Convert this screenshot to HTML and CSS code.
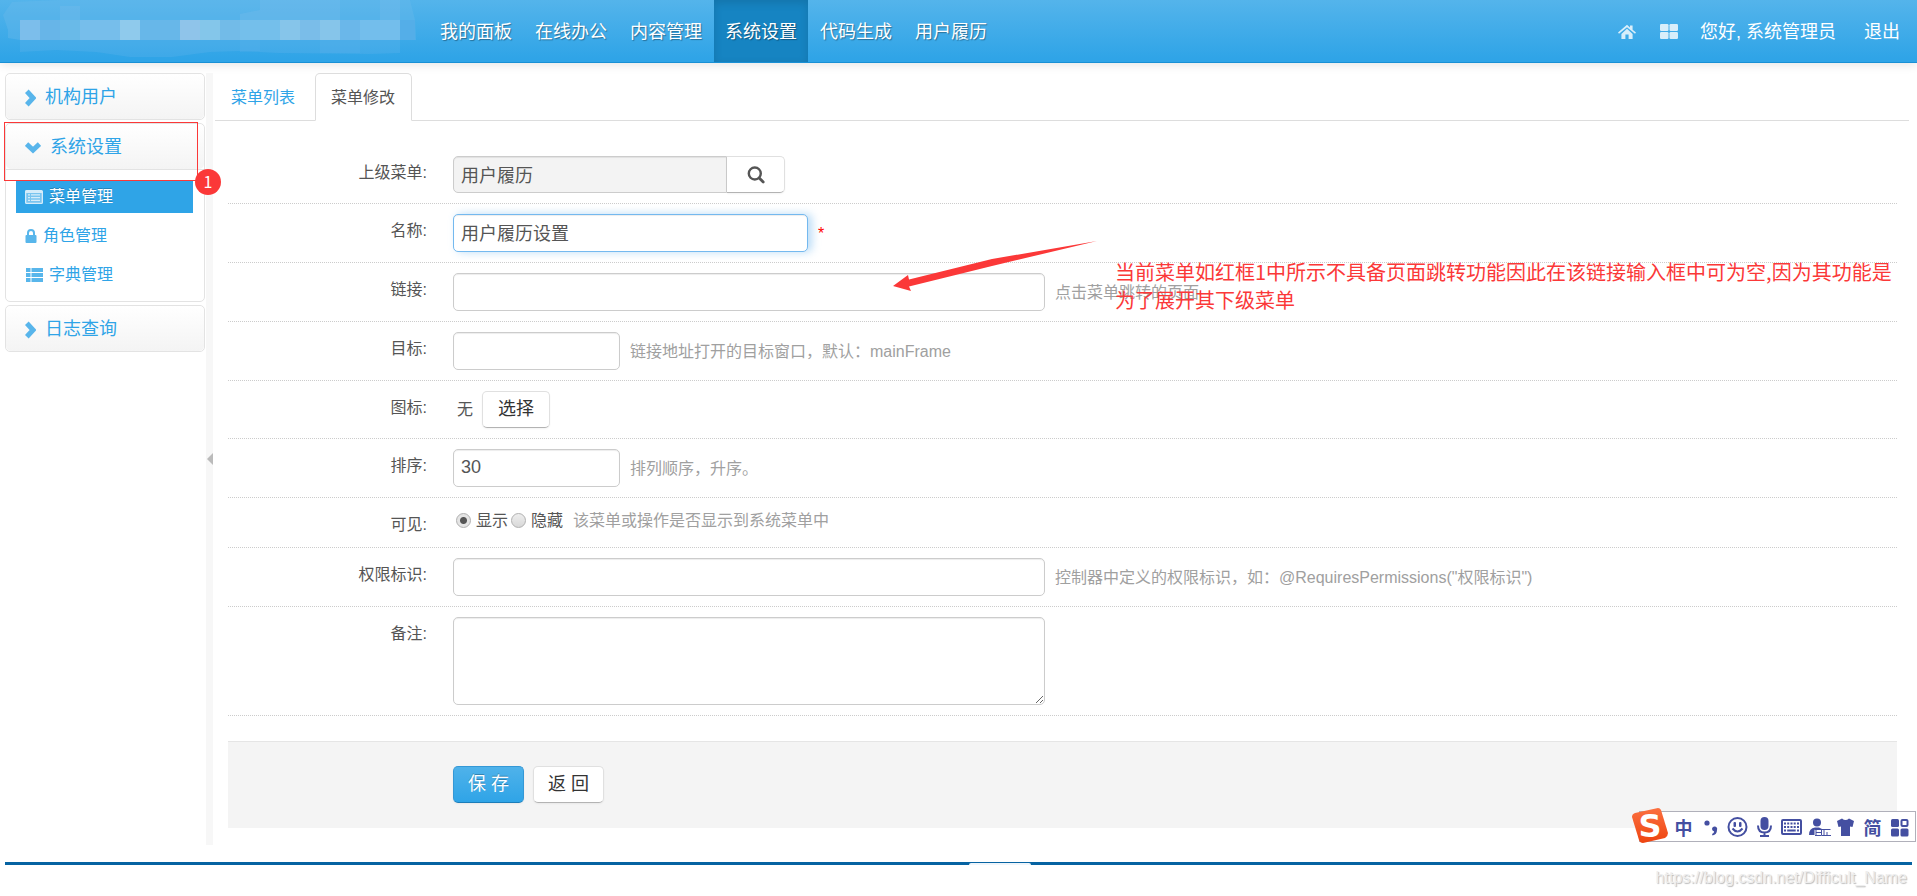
FILE: index.html
```html
<!DOCTYPE html>
<html lang="zh-CN">
<head>
<meta charset="utf-8">
<title>菜单修改</title>
<link rel="stylesheet" href="styles.css">
</head>
<body>
<header class="navbar">
  <svg class="brand" width="418" height="60" viewBox="0 0 418 60" aria-hidden="true">
    <path fill="#6ab8ea" fill-opacity=".4" d="M12 2 60 0H410l5 20 1 20H20L8 38V30L3 15z"/>
    <path fill="#6ab8ea" fill-opacity=".25" d="M20 40H400v13l-30 1-92-1-38-2-30 1-38 5h-42l-34-5-40-2-18 1-18 1z"/>
    <path fill="#7abdec" fill-opacity=".3" d="M60 6h20v14H60zM240 14l20-4V0h80v20h-100zM380 0h20v20h-20z"/>
    <path fill="#58b0ea" fill-opacity=".3" d="M240 40h20v11l-20 1zM320 40h40v13h-40z"/>
    <g>
      <rect x="20" y="20" width="20" height="20" fill="#7cbeeb"/><rect x="40" y="20" width="20" height="20" fill="#67b5e8"/>
      <rect x="60" y="20" width="20" height="20" fill="#69bae8"/><rect x="80" y="20" width="40" height="20" fill="#76beeb"/>
      <rect x="120" y="20" width="20" height="20" fill="#8fcaec"/><rect x="140" y="20" width="40" height="20" fill="#67b7e9"/>
      <rect x="180" y="20" width="20" height="20" fill="#8fc4ea"/><rect x="200" y="20" width="20" height="20" fill="#84c6ea"/>
      <rect x="220" y="20" width="20" height="20" fill="#72bbe8"/><rect x="240" y="20" width="40" height="20" fill="#74bfeb"/>
      <rect x="280" y="20" width="20" height="20" fill="#86c5ea"/><rect x="300" y="20" width="20" height="20" fill="#7abde9"/>
      <rect x="320" y="20" width="20" height="20" fill="#86c5ea"/><rect x="340" y="20" width="20" height="20" fill="#6ab7ea"/>
      <rect x="360" y="20" width="40" height="20" fill="#73beec"/><rect x="400" y="20" width="15" height="20" fill="#54aee8"/>
    </g>
  </svg>
  <nav class="nav">
    <a href="#">我的面板</a>
    <a href="#">在线办公</a>
    <a href="#">内容管理</a>
    <a href="#" class="active">系统设置</a>
    <a href="#">代码生成</a>
    <a href="#">用户履历</a>
  </nav>
  <div class="user">
    <a href="#" class="user-icon" aria-label="首页"><svg width="18" height="16" viewBox="0 0 18 16"><path d="M9 4.800 14.600 10v5h-4v-4.500H7.400V15h-4v-5zM9 .800l3 2.600V1.500h2.600v4.200L18 8.600l-1 1.200L9 3.200 1 9.800 0 8.600z"/></svg></a>
    <a href="#" class="user-icon" aria-label="主题"><svg width="18" height="16" viewBox="0 0 18 16"><rect width="8.500" height="7" rx="1.200"/><rect x="9.500" width="8.500" height="7" rx="1.200"/><rect y="8" width="8.500" height="7" rx="1.200"/><rect x="9.500" y="8" width="8.500" height="7" rx="1.200"/></svg></a>
    <a href="#">您好, 系统管理员</a>
    <a href="#">退出</a>
  </div>
</header>

<main class="main">
  <aside class="sidebar">
    <section class="card">
      <a href="#" class="card-head"><svg width="11" height="18" viewBox="0 0 11 18"><path class="chev" d="M1.800 2.300 8 9l-6.200 6.700"/></svg>机构用户</a>
    </section>
    <section class="card">
      <a href="#" class="card-head"><svg width="16" height="12" viewBox="0 0 16 12"><path class="chev" d="M1.500 2 8 8l6.500-6"/></svg>系统设置</a>
      <ul class="menu">
        <li><a href="#" class="active"><svg width="18" height="14" viewBox="0 0 18 14"><rect x=".5" y=".5" width="17" height="13" rx="1.500" fill-opacity=".45"/><path fill-rule="evenodd" d="M1.500 0h15A1.500 1.500 0 0 1 18 1.500v11a1.500 1.500 0 0 1-1.500 1.500h-15A1.500 1.500 0 0 1 0 12.500v-11A1.500 1.500 0 0 1 1.500 0zM1.300 3v9.700h15.400V3zM3 4.300h2v1.300H3zm3 0h9v1.300H6zM3 7h2v1.300H3zm3 0h9v1.300H6zM3 9.700h2V11H3zm3 0h9V11H6z"/></svg>菜单管理</a></li>
        <li><a href="#"><svg width="12" height="14" viewBox="0 0 12 14"><path fill-rule="evenodd" d="M2 6V4a4 4 0 0 1 8 0v2h.500a1 1 0 0 1 1 1v6a1 1 0 0 1-1 1h-9a1 1 0 0 1-1-1V7a1 1 0 0 1 1-1zm2 0h4V4a2 2 0 0 0-4 0z"/></svg>角色管理</a></li>
        <li><a href="#"><svg width="18" height="14" viewBox="0 0 18 14"><path d="M1 0h4.500v4H1zm5.500 0H18v4H6.500zM1 5h4.500v4H1zm5.500 0H18v4H6.500zM1 10h4.500v4H1zm5.500 0H18v4H6.500z"/></svg>字典管理</a></li>
      </ul>
    </section>
    <section class="card">
      <a href="#" class="card-head"><svg width="11" height="18" viewBox="0 0 11 18"><path class="chev" d="M1.800 2.300 8 9l-6.200 6.700"/></svg>日志查询</a>
    </section>
  </aside>
  <div class="splitter"><svg width="6" height="12" viewBox="0 0 6 12"><path fill="#bbb" d="M6 0v12L0 6z"/></svg></div>

  <div class="content">
    <nav class="tabs">
      <a href="#">菜单列表</a>
      <a href="#" class="active">菜单修改</a>
    </nav>
    <form class="form">
      <div class="row">
        <label class="name" for="parent">上级菜单:</label>
        <div class="control group">
          <input id="parent" class="w-parent" type="text" value="用户履历" readonly>
          <button type="button" class="btn search" aria-label="查找"><svg width="18" height="18" viewBox="0 0 18 18"><circle cx="7.800" cy="7.500" r="6" fill="none" stroke="#555" stroke-width="2.400"/><path d="m12.200 12 4 4" stroke="#555" stroke-width="2.800" stroke-linecap="round"/></svg></button>
        </div>
      </div>
      <div class="row">
        <label class="name" for="title">名称:</label>
        <div class="control"><input id="title" class="w-name current" type="text" value="用户履历设置"><span class="required">*</span></div>
      </div>
      <div class="row">
        <label class="name" for="href">链接:</label>
        <div class="control"><input id="href" class="w-full" type="text"><span class="help">点击菜单跳转的页面</span></div>
      </div>
      <div class="row">
        <label class="name" for="target">目标:</label>
        <div class="control"><input id="target" class="w-small" type="text"><span class="help">链接地址打开的目标窗口，默认：mainFrame</span></div>
      </div>
      <div class="row">
        <label class="name" for="pick">图标:</label>
        <div class="control icon-pick"><span>无</span><button id="pick" type="button" class="btn">选择</button></div>
      </div>
      <div class="row">
        <label class="name" for="sort">排序:</label>
        <div class="control"><input id="sort" class="w-small" type="text" value="30"><span class="help">排列顺序，升序。</span></div>
      </div>
      <div class="row">
        <span class="name">可见:</span>
        <div class="control radios">
          <label><input type="radio" name="show" checked>显示</label>
          <label><input type="radio" name="show">隐藏</label>
          <span class="help">该菜单或操作是否显示到系统菜单中</span>
        </div>
      </div>
      <div class="row">
        <label class="name" for="perm">权限标识:</label>
        <div class="control"><input id="perm" class="w-full" type="text"><span class="help">控制器中定义的权限标识，如：@RequiresPermissions("权限标识")</span></div>
      </div>
      <div class="row">
        <label class="name" for="remarks">备注:</label>
        <div class="control"><textarea id="remarks" class="w-full"></textarea></div>
      </div>
      <div class="actions">
        <button type="button" class="btn primary">保 存</button>
        <button type="button" class="btn">返 回</button>
      </div>
    </form>
  </div>
</main>

<footer class="footer"><span class="notch"></span></footer>
<div class="watermark">https://blog.csdn.net/Difficult_Name</div>

<div class="mark-box"></div>
<div class="mark-badge">1</div>
<svg class="mark-arrow" width="206" height="54" viewBox="0 0 206 54" aria-hidden="true"><path fill="#fb3838" d="m1 46 15-11 1 4.500L100 19 205 1 100 26 17 46.500l2 4.500z"/></svg>
<p class="mark-text">当前菜单如红框1中所示不具备页面跳转功能因此在该链接输入框中可为空,因为其功能是<br>为了展开其下级菜单</p>

<div class="ime">
  <svg class="ime-logo" width="38" height="38" viewBox="0 0 38 38" aria-hidden="true">
    <defs><linearGradient id="lg" x1="0" y1="0" x2="0" y2="1"><stop offset="0" stop-color="#fb7040"/><stop offset="1" stop-color="#ee4410"/></linearGradient></defs>
    <path fill="url(#lg)" d="M4 6 27 1q2 0 3 2l7 23q0 3-3 5L12 36q-3 0-4-3L1 10q0-3 3-4z"/>
    <text x="19" y="30" text-anchor="middle">S</text>
  </svg>
  <span>中</span>
  <svg viewBox="0 0 27 24"><circle cx="10" cy="8" r="2.600"/><path d="M15 14a2.600 2.600 0 1 1 5 1q0 4.500-4.500 5.500l-.500-1.500q2-1 2.200-2.600-2.200-.400-2.200-2.400z"/></svg>
  <svg viewBox="0 0 27 24"><circle class="ln" cx="13.500" cy="12" r="9"/><rect x="9.500" y="7" width="2.500" height="5" rx="1"/><rect x="15" y="7" width="2.500" height="5" rx="1"/><path class="ln" d="M8.500 13.500q5 6 10 0"/></svg>
  <svg viewBox="0 0 27 24"><rect x="9.500" y="2" width="8" height="13" rx="4"/><path class="ln" d="M7 10.500q0 7 6.500 7t6.500-7M13.500 17v4.500M9 21h9"/></svg>
  <svg viewBox="0 0 27 24"><path fill-rule="evenodd" d="M5 4h17q2 0 2 2v12q0 2-2 2H5q-2 0-2-2V6q0-2 2-2zm0 2v12h17V6z"/><path d="M6 7.500h2v2H6zm3.200 0h2v2h-2zm3.300 0h2v2h-2zm3.200 0h2v2h-2zm3.300 0h2v2h-2zM6 11h2v2H6zm3.200 0h2v2h-2zm3.300 0h2v2h-2zm3.200 0h2v2h-2zm3.300 0h2v2h-2zM6 14.500h2v2H6zm3.200 0h8.500v2H9.200zm9.800 0h2v2h-2z"/></svg>
  <svg viewBox="0 0 27 24"><circle cx="12" cy="7.500" r="4"/><path d="M4 20q0-7 6-7.500h4l4 2H9.500V20z"/><path class="thin" d="M9.500 14.500h16M11 14.500v6M11 17.500h5M10 20.500h6M16.500 14.500v6h2.500v-6M22 17v4M19 20.500h7"/></svg>
  <svg viewBox="0 0 27 24"><path d="M10 3.500q3.500 3 7 0L22 6l-1.500 6-2.500-.500V21H9v-9.500l-2.500.5L5 6z"/></svg>
  <span>简</span>
  <svg viewBox="0 0 27 24"><rect x="5" y="4" width="8" height="8" rx="1.500"/><rect class="ln" x="15.500" y="5" width="6" height="6" rx="1"/><rect x="5" y="13.500" width="8" height="8" rx="1.500"/><rect x="14.500" y="13.500" width="8" height="8" rx="1.500"/></svg>
</div>
</body>
</html>
```
FILE: styles.css
```css
* { box-sizing: border-box; }

body {
  position: relative;
  min-height: 100vh;
  margin: 0;
  overflow-x: hidden;
  background: #fff;
  color: #555;
  font: 16px/25px "Liberation Sans", "Noto Sans CJK SC", sans-serif;
}

a { color: #2fa4e7; text-decoration: none; }

/* top bar */
.navbar {
  display: flex;
  align-items: stretch;
  height: 63px;
  border-bottom: 1px solid #1990d5;
  background: linear-gradient(#54b4eb, #2fa4e7 95%);
  box-shadow: 0 1px 10px rgba(0, 0, 0, .12);
  font-size: 18px;
}
.navbar a { color: #fff; }
.brand { flex: none; margin-right: 11px; }
.nav { display: flex; gap: 1px; }
.nav a {
  display: flex;
  align-items: center;
  padding: 2px 11px 0;
  text-shadow: 1px 1px 1px rgba(0, 0, 0, .35);
}
.nav a.active {
  background: #1684c2;
  box-shadow: inset 0 3px 8px rgba(0, 0, 0, .125);
}
.user {
  display: flex;
  align-items: center;
  margin-left: auto;
  padding: 2px 17px 0 0;
}
.user a { margin-left: 28px; }
.user .user-icon { display: flex; margin-left: 24px; }
.user .user-icon + a:not(.user-icon) { margin-left: 22px; }
.user svg { fill: #fff; opacity: .8; }

/* side menu */
.main { display: flex; padding: 10px 8px 0 5px; }
.sidebar {
  display: flex;
  flex: none;
  flex-direction: column;
  gap: 3px;
  width: 200px;
}
.card { border: 1px solid #e3e3e3; border-radius: 5px; }
.card-head {
  display: flex;
  align-items: center;
  gap: 9px;
  height: 45px;
  padding: 2px 0 0 19px;
  border-radius: 5px;
  background: linear-gradient(#fff, #f4f4f4);
  font-size: 18px;
}
.chev {
  fill: none;
  stroke: #2fa4e7;
  stroke-width: 5;
  opacity: .8;
}
.menu {
  display: flex;
  flex-direction: column;
  gap: 6px;
  margin: 0;
  padding: 10px 11px 10px 10px;
  border-top: 1px solid #e3e3e3;
  list-style: none;
}
.menu a {
  display: flex;
  align-items: center;
  gap: 6px;
  height: 33px;
  padding-left: 9px;
}
.menu svg { fill: #2fa4e7; opacity: .8; }
.menu .active {
  background: #2fa4e7;
  color: #fff;
  text-shadow: 0 -1px 0 rgba(0, 0, 0, .2);
}
.menu .active svg { fill: #fff; opacity: .8; }
.splitter {
  display: flex;
  flex: none;
  align-items: center;
  justify-content: flex-end;
  width: 7px;
  margin: 0 2px 0 1px;
  background: #f7f7f7;
}

/* content */
.content { flex: 1; min-width: 0; padding-bottom: 17px; }
.tabs {
  display: flex;
  gap: 3px;
  height: 48px;
  border-bottom: 1px solid #ddd;
}
.tabs a {
  display: flex;
  align-items: center;
  height: 48px;
  padding: 0 16px 0 15px;
  border: 1px solid transparent;
  border-radius: 5px 5px 0 0;
}
.tabs .active {
  border-color: #ddd #ddd #fff;
  background: #fff;
  color: #555;
}
.form { margin: 25px 12px 0 13px; }
.row {
  display: flex;
  align-items: flex-start;
  gap: 26px;
  padding: 10px 0;
  border-bottom: 1px dotted #ccc;
}
.name {
  flex: none;
  width: 199px;
  padding-top: 4px;
  text-align: right;
}
.control { display: flex; align-items: center; }
.help { padding-left: 10px; color: #a0a0a0; }
.required { padding-left: 10px; color: #f00; }

input[type="text"], textarea {
  display: block;
  height: 38px;
  padding: 0 7px 2px;
  border: 1px solid #ccc;
  border-radius: 5px;
  outline: none;
  background: #fff;
  box-shadow: inset 0 1px 1px rgba(0, 0, 0, .075);
  color: #555;
  font: inherit;
  font-size: 18px;
}
textarea { height: 88px; }
.w-small { width: 167px; }
.w-name { width: 355px; }
.w-full { width: 592px; }
input.current {
  border-color: #74b9ef;
  box-shadow: inset 0 1px 1px rgba(0, 0, 0, .075), 4px 0 8px rgba(82, 168, 236, .4);
}
.group input.w-parent {
  width: 274px;
  height: 37px;
  border-radius: 5px 0 0 5px;
  background: #f3f3f3;
}
.btn {
  height: 37px;
  padding: 0 15px;
  border: 1px solid #e0e0e0;
  border-bottom-color: #b3b3b3;
  border-radius: 5px;
  background: #fff;
  box-shadow: 0 1px 2px rgba(0, 0, 0, .05);
  color: #333;
  font: inherit;
  font-size: 18px;
}
.btn.search {
  display: flex;
  align-items: center;
  justify-content: center;
  width: 58px;
  border-left: 0;
  border-radius: 0 5px 5px 0;
}
.btn.primary {
  border-color: #3498d6 #3498d6 #1c7db9;
  background: linear-gradient(#4fb2ea, #2fa4e7);
  color: #fff;
  text-shadow: 0 -1px 0 rgba(0, 0, 0, .25);
}
.icon-pick { gap: 9px; padding-left: 4px; }
.radios label { display: flex; align-items: center; }
input[type="radio"] {
  width: 15px;
  height: 15px;
  margin: 0 5px 0 3px;
  border: 1px solid #b0b0b0;
  border-radius: 50%;
  appearance: none;
  background: linear-gradient(#eee, #d8d8d8);
}
input[type="radio"]:checked {
  background: radial-gradient(circle, #555 3px, #e4e4e4 4px);
}
.actions {
  display: flex;
  gap: 9px;
  margin-top: 25px;
  padding: 24px 0 25px 225px;
  border-top: 1px solid #e5e5e5;
  background: #f4f4f4;
}
.actions .btn { padding: 0 14px; }

/* page foot */
.footer {
  display: flex;
  justify-content: center;
  align-items: flex-end;
  height: 3px;
  margin: 17px 5px 0;
  background: #0663a2;
}
.notch {
  width: 62px;
  height: 2px;
  margin-left: 83px;
  border-radius: 8px 8px 0 0;
  background: #eef5fb;
}
.watermark {
  padding-right: 10px;
  color: #eee;
  font-size: 16px;
  text-align: right;
  text-shadow: 1px 1px 1px #bbb;
}

/* annotations drawn over the page */
.mark-box {
  position: absolute;
  top: 122px;
  left: 4px;
  width: 194px;
  height: 59px;
  border: 1px solid #fb3838;
}
.mark-badge {
  position: absolute;
  top: 169px;
  left: 195px;
  width: 26px;
  height: 26px;
  border-radius: 50%;
  background: #fb3838;
  color: #fff;
  font-family: "Noto Sans CJK SC", sans-serif;
  text-align: center;
}
.mark-arrow { position: absolute; top: 240px; left: 892px; }
.mark-text {
  position: absolute;
  top: 258px;
  left: 1115px;
  margin: 0;
  color: #fb3838;
  font: 20px/28px "Noto Sans CJK SC", sans-serif;
  white-space: nowrap;
}

/* input method bar */
.ime {
  position: absolute;
  top: 811px;
  right: 1px;
  display: flex;
  align-items: center;
  height: 31px;
  padding: 0 2px 0 30px;
  border: 1px solid #b0b0ba;
  background: #fff;
  color: #444fa1;
  font: 700 18px/24px "Noto Sans CJK SC", sans-serif;
}
.ime svg { width: 27px; height: 24px; fill: #444fa1; }
.ime span { width: 27px; text-align: center; }
.ime .ln { fill: none; stroke: #444fa1; stroke-width: 2; }
.ime .thin { fill: none; stroke: #444fa1; stroke-width: 1; }
.ime .ime-logo {
  position: absolute;
  top: -5px;
  left: -9px;
  width: 38px;
  height: 38px;
}
.ime-logo text { fill: #fff; font: 700 32px "DejaVu Sans", sans-serif; }
```
